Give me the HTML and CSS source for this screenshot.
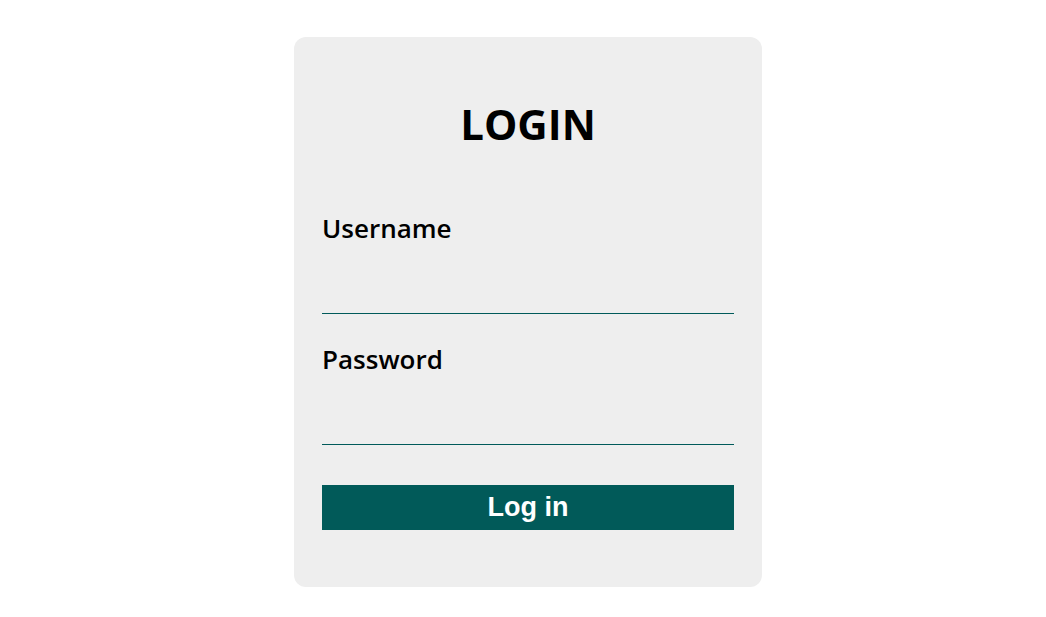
FILE: index.html
```html
<!DOCTYPE html>
<html>
<head>
<meta charset="utf-8">
<link rel="stylesheet" href="styles.css">
</head>
<body>
<div class="page">
  <form class="card">
    <h1 class="title">LOGIN</h1>
    <label class="label" for="u">Username</label>
    <input class="field" id="u" type="text">
    <label class="label label-second" for="p">Password</label>
    <input class="field" id="p" type="password">
    <button class="btn" type="button">Log in</button>
  </form>
</div>
</body>
</html>
```
FILE: styles.css
```css
html, body {
  margin: 0;
  padding: 0;
  background: #ffffff;
}
.page {
  display: flex;
  justify-content: center;
  padding: 37px 0 0 10px;
}
.card {
  width: 468px;
  height: 550px;
  box-sizing: border-box;
  background: #eeeeee;
  border-radius: 12px;
  padding: 0 28px;
  display: flex;
  flex-direction: column;
}
.title {
  margin: 62px 0 0 0;
  font-family: "Open Sans", sans-serif;
  font-weight: 700;
  font-size: 42px;
  line-height: 50px;
  text-align: center;
  color: #000;
}
.label {
  margin-top: 62px;
  font-family: "Open Sans", sans-serif;
  font-weight: 600;
  font-size: 26px;
  line-height: 34px;
  color: #000;
}
.label-second {
  margin-top: 28px;
}
.field {
  margin-top: 32px;
  height: 36px;
  border: none;
  border-bottom: 1px solid #005a5a;
  background: transparent;
  outline: none;
  padding: 0;
}
.btn {
  margin-top: 40px;
  height: 45px;
  border: none;
  background: #015a59;
  color: #ffffff;
  font-family: "Liberation Sans", Arial, sans-serif;
  font-weight: 700;
  font-size: 27px;
  padding: 0;
}
```
